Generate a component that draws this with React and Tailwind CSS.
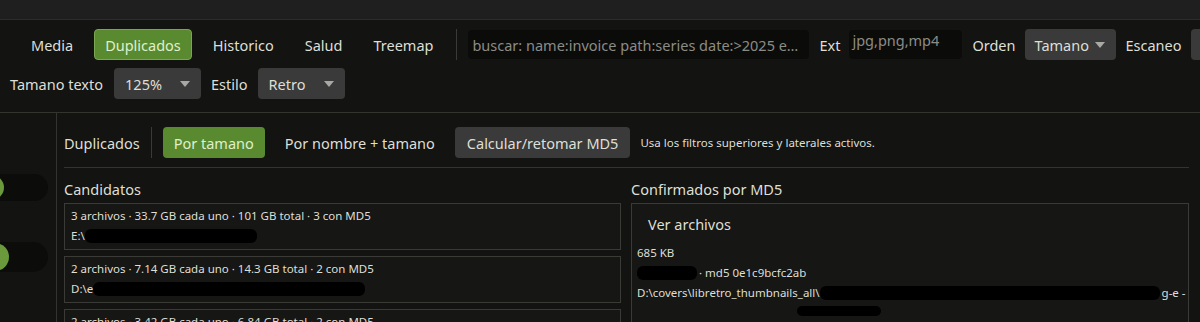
import React from "react";

const Caret = () => (
  <svg width="10" height="6" viewBox="0 0 10 6" className="shrink-0">
    <path d="M0 0 L10 0 L5 6 Z" fill="#a8a8a4" />
  </svg>
);

function Select({ label, w }) {
  return (
    <div
      className={`flex items-center h-[31px] rounded-[4px] bg-[#3a3a3a] px-[11px] ${w} justify-between shrink-0`}
    >
      <span>{label}</span>
      <Caret />
    </div>
  );
}

function Blot({ w, h = "h-[14px]" }) {
  return <span className={`inline-block ${w} ${h} bg-black rounded-[6px] align-middle shrink-0`} />;
}

function Card({ title, path, blotW }) {
  return (
    <div className="border border-[#3a3a37] bg-[#161614] h-[47px] px-[6px] pt-[2px] text-[11.5px] leading-[20px] shrink-0">
      <div>{title}</div>
      <div className="flex items-center">
        <span>{path}</span>
        <Blot w={blotW} />
      </div>
    </div>
  );
}

export default function App() {
  return (
    <div
      className="w-[1200px] h-[322px] overflow-hidden bg-[#131311] text-[#dedfd6] text-[14.5px] leading-[20px]"
      style={{ fontFamily: '"Noto Sans", "Open Sans", sans-serif' }}
    >
      <div className="h-[20px] bg-[#1f1f1f] border-b border-[#2c2c2a]" />

      {/* toolbar */}
      <div className="h-[93px] border-b border-[#33332f] pl-[10px] pt-[9px] overflow-hidden">
        <div className="flex items-center h-[31px] whitespace-nowrap">
          <div className="flex items-center gap-[11px] ml-[11px] shrink-0">
            <div className="px-[10px]">Media</div>
            <div className="px-[10px] h-[31px] flex items-center rounded-[4px] bg-[#5a8a30] border border-[#7aa552] text-[#dff0cc]">
              Duplicados
            </div>
            <div className="px-[10px]">Historico</div>
            <div className="px-[10px]">Salud</div>
            <div className="px-[10px]">Treemap</div>
          </div>
          <div className="w-[1px] h-[31px] bg-[#3a3a36] ml-[13px] shrink-0" />
          <div className="ml-[11px] w-[341px] h-[29px] bg-[#0b0b0a] rounded-[4px] px-[4px] flex items-center text-[#8c8c86] overflow-hidden shrink-0">
            <span className="truncate">buscar: name:invoice path:series date:&gt;2025 e…</span>
          </div>
          <div className="ml-[10px] shrink-0">Ext</div>
          <div className="ml-[9px] w-[113px] h-[29px] bg-[#0b0b0a] rounded-[4px] px-[3px] text-[#8c8c86] leading-[20px] shrink-0">
            jpg,png,mp4
          </div>
          <div className="ml-[10px] shrink-0">Orden</div>
          <div className="ml-[9px] shrink-0">
            <div className="flex items-center gap-[6px] h-[31px] rounded-[4px] bg-[#3a3a3a] px-[10px] w-[91px]">
              <span>Tamano</span>
              <Caret />
            </div>
          </div>
          <div className="ml-[10px] shrink-0">Escaneo</div>
          <div className="ml-[9px] w-[40px] h-[31px] rounded-[4px] bg-[#3a3a3a] shrink-0" />
        </div>
        <div className="flex items-center h-[31px] mt-[8px] whitespace-nowrap">
          <div>Tamano texto</div>
          <div className="ml-[11px]">
            <Select label="125%" w="w-[87px]" />
          </div>
          <div className="ml-[10px]">Estilo</div>
          <div className="ml-[10px]">
            <Select label="Retro" w="w-[87px]" />
          </div>
        </div>
      </div>

      {/* body */}
      <div className="flex h-[209px]">
        <div className="w-[57px] border-r border-[#33332f] shrink-0 overflow-hidden relative">
          <div className="absolute left-[-20px] top-[61px] w-[68px] h-[27px] rounded-full bg-[#0c0c0a] flex items-center">
            <div className="w-[25px] h-[25px] rounded-full bg-[#6b9a3c] ml-[-1px]" />
          </div>
          <div className="absolute left-[-20px] top-[129px] w-[68px] h-[30px] rounded-full bg-[#0c0c0a] flex items-center">
            <div className="w-[28px] h-[28px] rounded-full bg-[#6b9a3c] ml-[1px]" />
          </div>
        </div>

        <div className="flex-1 pl-[7px] pr-[11px] overflow-hidden">
          <div className="flex items-start h-[55px] pt-[14px] border-b border-[#33332f] whitespace-nowrap">
            <div className="h-[31px] flex items-center">Duplicados</div>
            <div className="w-[1px] h-[31px] bg-[#3a3a36] ml-[11px]" />
            <div className="ml-[11px] h-[31px] px-[11px] flex items-center rounded-[4px] bg-[#5a8a30] text-[#dff0cc]">
              Por tamano
            </div>
            <div className="ml-[9px] px-[11px] h-[31px] flex items-center">Por nombre + tamano</div>
            <div className="ml-[9px] h-[31px] px-[12px] flex items-center rounded-[4px] bg-[#3a3a3a]">
              Calcular/retomar MD5
            </div>
            <div className="ml-[10px] h-[31px] flex items-center text-[11.5px]">
              Usa los filtros superiores y laterales activos.
            </div>
          </div>

          <div className="flex gap-[10px] mt-[8px]">
            <div className="w-[557px] shrink-0">
              <div className="h-[26px] flex items-center">Candidatos</div>
              <div className="flex flex-col gap-[6px] mt-[1px]">
                <Card
                  title="3 archivos · 33.7 GB cada uno · 101 GB total · 3 con MD5"
                  path={"E:\\"}
                  blotW="w-[172px]"
                />
                <Card
                  title="2 archivos · 7.14 GB cada uno · 14.3 GB total · 2 con MD5"
                  path={"D:\\e"}
                  blotW="w-[272px]"
                />
                <Card
                  title="2 archivos · 3.42 GB cada uno · 6.84 GB total · 2 con MD5"
                  path={"D:\\"}
                  blotW="w-[200px]"
                />
              </div>
            </div>
            <div className="flex-1 min-w-0">
              <div className="h-[26px] flex items-center">Confirmados por MD5</div>
              <div className="mt-[1px] border border-[#3a3a37] bg-[#161614] h-[140px] px-[5px] text-[11.5px] leading-[20px] overflow-hidden">
                <div className="text-[14.5px] h-[40px] flex items-center pl-[11px]">Ver archivos</div>
                <div className="mt-[-1px]">685 KB</div>
                <div className="flex items-center">
                  <Blot w="w-[60px]" />
                  <span className="ml-[2px]">· md5 0e1c9bcfc2ab</span>
                </div>
                <div className="flex items-center whitespace-nowrap">
                  <span>D:\covers\libretro_thumbnails_all\</span>
                  <Blot w="w-[340px]" />
                  <span className="ml-[2px]">g-e -</span>
                </div>
                <div className="flex items-center h-[14px] whitespace-nowrap">
                  <span className="ml-[160px]">
                    <Blot w="w-[84px]" h="h-[10px]" />
                  </span>
                </div>
              </div>
            </div>
          </div>
        </div>
      </div>
    </div>
  );
}
